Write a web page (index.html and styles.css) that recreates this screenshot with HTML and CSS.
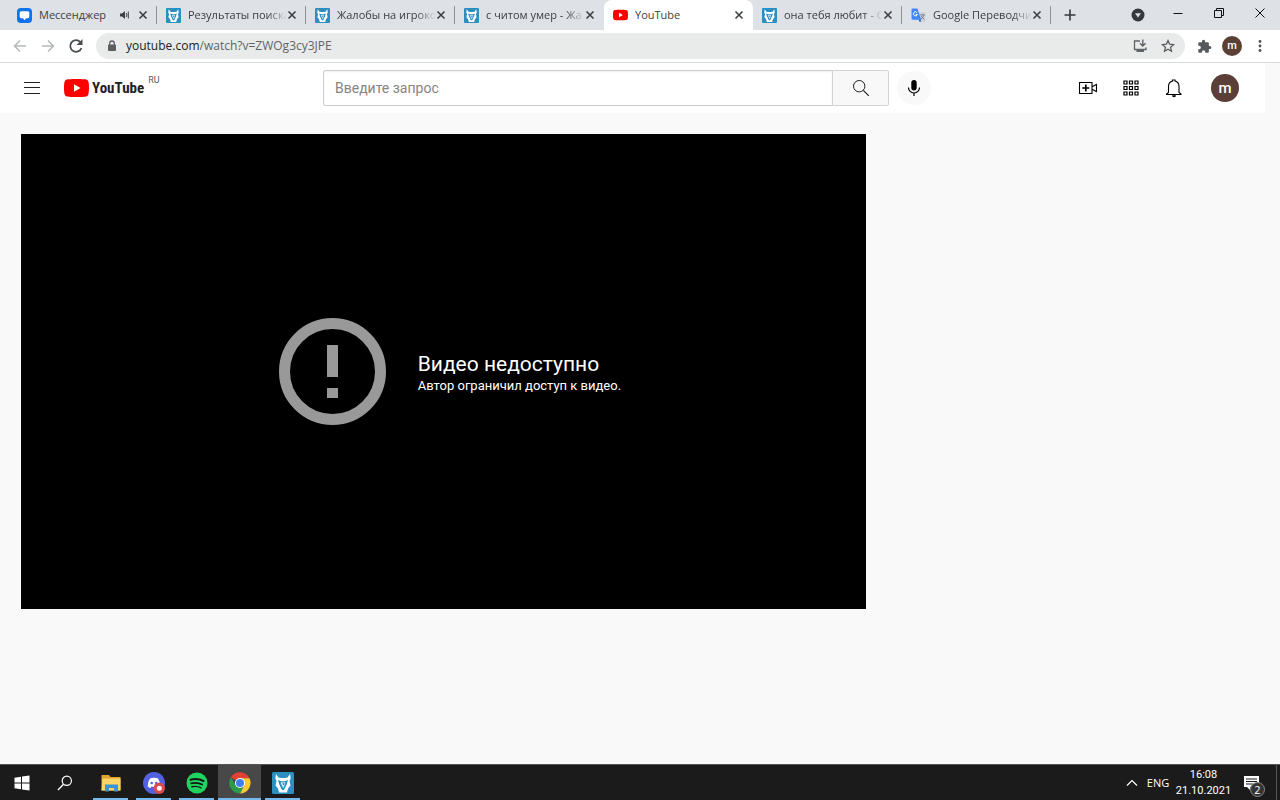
FILE: index.html
```html
<!DOCTYPE html>
<html lang="ru">
<head>
<meta charset="utf-8">
<meta name="viewport" content="width=device-width, initial-scale=1">
<title>YouTube</title>
<link rel="stylesheet" href="styles.css">
</head>
<body>
<svg class="defs" width="0" height="0" aria-hidden="true">
  <symbol id="close" viewBox="0 0 10 10"><path d="M1.500 1.500l7 7M8.500 1.500l-7 7" stroke="#3c4043" stroke-width="1.600" fill="none"/></symbol>
  <symbol id="fox" viewBox="0 0 22 22">
    <rect width="22" height="22" rx="1.500" fill="#2b8fc0"/>
    <path d="M4 2l2.500 3.500L9 6h4l2.500-.5L18 2l.7 4.500L17.500 9l1 4.500-2.500 3L15 20.500H7L6 16.500l-2.500-3 1-4.500L3.300 6.500z" fill="#fff"/>
    <path d="M6 8l3.500 1.200h3L16 8l-1.500 5L12 18h-2l-2.500-5z" fill="#2b8fc0"/>
    <path d="M8.500 10.500h5L11.300 16z" fill="#fff"/>
    <path d="M9.800 11.300h3l-1.300 2.500z" fill="#2b8fc0"/>
    <path d="M6.500 13l2 6.500M15.500 13l-2 6.500" stroke="#fff" stroke-width="1.200"/>
  </symbol>
  <symbol id="yt" viewBox="0 0 28 20"><path d="M27.400 3.100A3.500 3.500 0 0 0 24.900.6C22.700 0 14 0 14 0S5.300 0 3.100.6A3.500 3.500 0 0 0 .6 3.100C0 5.300 0 10 0 10s0 4.700.6 6.900a3.500 3.500 0 0 0 2.500 2.500C5.300 20 14 20 14 20s8.700 0 10.900-.6a3.500 3.500 0 0 0 2.500-2.500C28 14.700 28 10 28 10s0-4.700-.6-6.900z" fill="#f00"/><path d="M11.200 14.300L18.500 10l-7.300-4.300z" fill="#fff"/></symbol>
</svg>

<header class="browser">
  <div class="tabstrip">
    <nav class="tabs" aria-label="Вкладки">
      <div class="tab">
        <svg class="favicon" viewBox="0 0 14 14"><rect width="14" height="14" rx="3.500" fill="#0f73ee"/><path d="M4 3h6a1.500 1.500 0 0 1 1.500 1.500v3.500A1.500 1.500 0 0 1 10 9.500H8.500L7 11.500 5.500 9.500H4A1.500 1.500 0 0 1 2.500 8V4.500A1.500 1.500 0 0 1 4 3z" fill="#fff"/></svg>
        <a class="tab-title" href="#">Мессенджер</a>
        <svg class="sound" viewBox="0 0 10 10"><path d="M0 3.500h2L5 1v8L2 6.500H0z" fill="#3c4043"/><path d="M6.200 3q1.500 2 0 4M8.300 1.500v7" stroke="#3c4043" fill="none"/></svg>
        <button class="tab-close" aria-label="Закрыть"><svg><use href="#close"/></svg></button>
      </div>
      <div class="tab">
        <svg class="favicon"><use href="#fox"/></svg>
        <a class="tab-title" href="#">Результаты поиска</a>
        <button class="tab-close" aria-label="Закрыть"><svg><use href="#close"/></svg></button>
      </div>
      <div class="tab">
        <svg class="favicon"><use href="#fox"/></svg>
        <a class="tab-title" href="#">Жалобы на игроко</a>
        <button class="tab-close" aria-label="Закрыть"><svg><use href="#close"/></svg></button>
      </div>
      <div class="tab before-active">
        <svg class="favicon"><use href="#fox"/></svg>
        <a class="tab-title" href="#">с читом умер - Жа</a>
        <button class="tab-close" aria-label="Закрыть"><svg><use href="#close"/></svg></button>
      </div>
      <div class="tab active">
        <svg class="favicon"><use href="#yt"/></svg>
        <a class="tab-title" href="#" aria-current="page">YouTube</a>
        <button class="tab-close" aria-label="Закрыть"><svg><use href="#close"/></svg></button>
      </div>
      <div class="tab">
        <svg class="favicon"><use href="#fox"/></svg>
        <a class="tab-title" href="#">она тебя любит - С</a>
        <button class="tab-close" aria-label="Закрыть"><svg><use href="#close"/></svg></button>
      </div>
      <div class="tab">
        <svg class="favicon" viewBox="0 0 14 14"><path d="M6 4h6.500a1 1 0 0 1 1 1v7a1 1 0 0 1-1 1H9z" fill="#cfd3d8"/><path d="M8.500 6.500h4.500M10.800 5.500v1M12 6.500q-.5 2.500-3 4M9.500 7.500q1 2 3 3" stroke="#6a7f96" stroke-width=".8" fill="none"/><path d="M1.500.5H6L9.500 11H1.500a1 1 0 0 1-1-1V1.500a1 1 0 0 1 1-1z" fill="#4285f4"/><path d="M7 11h2.500L8.500 13.500z" fill="#2459b8"/><path d="M5.700 4.300A1.900 1.900 0 1 0 6 6H4.300" stroke="#fff" stroke-width=".9" fill="none"/></svg>
        <a class="tab-title" href="#">Google Переводчи</a>
        <button class="tab-close" aria-label="Закрыть"><svg><use href="#close"/></svg></button>
      </div>
      <button class="new-tab" aria-label="Новая вкладка"><svg viewBox="0 0 12 12"><path d="M6 .5v11M.5 6h11" stroke="#35383b" stroke-width="1.600"/></svg></button>
    </nav>
    <div class="window-controls">
      <button class="tab-search" aria-label="Поиск вкладок"><svg viewBox="0 0 14 14"><circle cx="7" cy="7" r="6.500" fill="#35393e"/><path d="M4 5.300h6L7 9.500z" fill="#dee1e6"/></svg></button>
      <button aria-label="Свернуть"><svg viewBox="0 0 14 14"><path d="M2.500 7.500h9" stroke="#111"/></svg></button>
      <button aria-label="Свернуть в окно"><svg viewBox="0 0 14 14"><path d="M2.500 4.500h7v7h-7zM4.500 4.500v-2h7v7h-2" stroke="#111" fill="none"/></svg></button>
      <button aria-label="Закрыть окно"><svg viewBox="0 0 14 14"><path d="M2.500 2.500l9 9M11.500 2.500l-9 9" stroke="#111"/></svg></button>
    </div>
  </div>

  <div class="toolbar">
    <button class="tool" aria-label="Назад"><svg viewBox="0 0 16 16"><path d="M14 8H2.500M8 2.500L2.500 8 8 13.500" stroke="#b5b8bb" stroke-width="1.500" fill="none"/></svg></button>
    <button class="tool" aria-label="Вперёд"><svg viewBox="0 0 16 16"><path d="M2 8h11.500M8 2.500l5.500 5.500L8 13.500" stroke="#b5b8bb" stroke-width="1.500" fill="none"/></svg></button>
    <button class="tool" aria-label="Обновить"><svg viewBox="0 0 16 16"><path d="M13.500 10A5.800 5.800 0 1 1 12.300 4" stroke="#4b4f53" stroke-width="1.800" fill="none"/><path d="M14.500 1v6H8.500z" fill="#4b4f53"/></svg></button>
    <form class="omnibox">
      <svg class="lock" viewBox="0 0 10 12"><path d="M2.700 5V3.300a2.300 2.300 0 0 1 4.600 0V5" stroke="#5b5f62" stroke-width="1.300" fill="none"/><rect x="1" y="4.500" width="8" height="6.500" rx="1" fill="#5b5f62"/></svg>
      <label class="url"><span class="host">youtube.com</span><input type="text" aria-label="Адрес" value="/watch?v=ZWOg3cy3JPE"></label>
      <button type="button" class="tool" aria-label="Установить"><svg viewBox="0 0 16 16"><path d="M8 3H2.500v8.500H14V9.500" stroke="#5f6368" stroke-width="1.300" fill="none"/><path d="M10.800 1.500v6M8 5.200L10.800 8l2.800-2.800" stroke="#5f6368" stroke-width="1.400" fill="none"/><path d="M4.500 13h7.500" stroke="#5f6368" stroke-width="2"/></svg></button>
      <button type="button" class="tool" aria-label="Добавить в закладки"><svg viewBox="0 0 16 16"><path d="M8 2.500l1.600 3.700 4 .4-3 2.700.9 4L8 11.200l-3.500 2.100.9-4-3-2.700 4-.4z" stroke="#55595d" stroke-width="1.200" fill="none"/></svg></button>
    </form>
    <button class="tool puzzle" aria-label="Расширения"><svg viewBox="0 0 24 24"><path d="M20.500 11H19V7a2 2 0 0 0-2-2h-4V3.500a2.500 2.500 0 0 0-5 0V5H4a2 2 0 0 0-2 2v3.800h1.500a2.700 2.700 0 0 1 0 5.400H2V20a2 2 0 0 0 2 2h3.800v-1.500a2.700 2.700 0 0 1 5.400 0V22H17a2 2 0 0 0 2-2v-4h1.500a2.500 2.500 0 0 0 0-5z" fill="#55595e"/></svg></button>
    <button class="tool" aria-label="Профиль"><span class="avatar small">m</span></button>
    <button class="tool" aria-label="Меню"><svg viewBox="0 0 16 16"><g fill="#4f5357"><circle cx="8" cy="3.500" r="1.400"/><circle cx="8" cy="8" r="1.400"/><circle cx="8" cy="12.500" r="1.400"/></g></svg></button>
  </div>
</header>

<div class="page">
  <header class="masthead">
    <div class="brand">
      <button class="menu" aria-label="Меню YouTube"><svg viewBox="0 0 16 14"><path d="M0 1.500h16M0 6.500h16M0 12.500h16" stroke="#222"/></svg></button>
      <a class="logo" href="#"><svg><use href="#yt"/></svg><span class="wordmark">YouTube</span><span class="region">RU</span></a>
    </div>
    <form class="search">
      <input type="text" class="search-box" placeholder="Введите запрос" aria-label="Введите запрос">
      <button type="button" class="search-button" aria-label="Поиск"><svg viewBox="0 0 18 18"><circle cx="7.200" cy="7.200" r="5.700" stroke="#222" fill="none"/><path d="M11.300 11.300l5.500 5.500" stroke="#222" stroke-width="1.200"/></svg></button>
      <button type="button" class="mic" aria-label="Голосовой поиск"><svg viewBox="0 0 18 18"><rect x="6.300" y="1" width="5.400" height="10.500" rx="2.700"/><path d="M3.500 8.500a5.500 5.500 0 0 0 11 0M9 14v3" stroke="#000" stroke-width="1.200" fill="none"/></svg></button>
    </form>
    <div class="actions">
      <button aria-label="Создать"><svg viewBox="0 0 20 20"><path d="M1.500 4.500h12.500v11H1.500zM14.500 8.500l4-2v7l-4-2" stroke="#000" stroke-width="1.100" fill="none"/><path d="M7.800 6.500v7M4.300 10h7" stroke="#000" stroke-width="1.700"/></svg></button>
      <button aria-label="Приложения"><svg viewBox="0 0 20 20"><g fill="none" stroke="#000" stroke-width="1.200"><path d="M3 3h3v3H3zM8.500 3h3v3h-3zM14 3h3v3h-3zM3 8.500h3v3H3zM8.500 8.500h3v3h-3zM14 8.500h3v3h-3zM3 14h3v3H3zM8.500 14h3v3h-3zM14 14h3v3h-3z"/></g></svg></button>
      <button aria-label="Уведомления"><svg viewBox="0 0 20 20"><path d="M4.500 14.500V8.500q0-4.500 4-5.500V2h2.500v1q4 1 4 5.500v6l2 1.500v.5H2.500v-.5z" stroke="#000" stroke-width="1.100" fill="none"/><path d="M8 17.200h4a2 2 0 0 1-4 0z"/></svg></button>
      <button class="account" aria-label="Аккаунт"><span class="avatar">m</span></button>
    </div>
  </header>

  <main class="content">
    <section class="player">
      <div class="error">
        <svg class="error-icon" viewBox="0 0 107 107"><circle cx="53.500" cy="53.500" r="48" stroke="#999" stroke-width="11" fill="none"/><path d="M48 27h11v32H48zM48 70h11v10H48z" fill="#999"/></svg>
        <div class="error-text">
          <h1>Видео недоступно</h1>
          <p>Автор ограничил доступ к видео.</p>
        </div>
      </div>
    </section>
  </main>
</div>

<footer class="taskbar">
  <button aria-label="Пуск"><svg class="glyph" viewBox="0 0 16 16"><path d="M.5 2.700L7 1.800v5.700H.5zM8 1.600l7.500-1.100v7H8zM.5 8.500H7v5.700l-6.500-.9zM8 8.500h7.500v7L8 14.400z" fill="#fff"/></svg></button>
  <button aria-label="Поиск Windows"><svg class="glyph" viewBox="0 0 16 16"><circle cx="9.800" cy="5.800" r="4.600" stroke="#fff" stroke-width="1.200" fill="none"/><path d="M6.500 9.200L1 15" stroke="#fff" stroke-width="1.400"/></svg></button>
  <div class="apps">
    <button class="app" aria-label="Проводник"><svg viewBox="0 0 22 22"><path d="M1.500 3h7.500l1.500 2h10v13.500h-19z" fill="#e0a32e"/><path d="M2.500 6.500h18v12h-19z" fill="#fbd568"/><path d="M5 12.500h13v7h-4V16H9v3.500H5z" fill="#3f94cf"/></svg></button>
    <button class="app" aria-label="Discord"><svg viewBox="0 0 22 22"><circle cx="11" cy="11" r="11" fill="#5361e0"/><path d="M7 6.500q4-1.500 8 0 2.500 3.500 2.300 8-1.500 1.300-3 1.400l-.8-1.300q-2.500.6-5 0l-.8 1.300q-1.500-.1-3-1.400Q4.500 10 7 6.500z" fill="#fff"/><circle cx="8.700" cy="11" r="1.300" fill="#5361e0"/><circle cx="13.300" cy="11" r="1.300" fill="#5361e0"/><circle cx="16.300" cy="16.300" r="5.700" fill="#e0484d"/><circle cx="16.300" cy="16.300" r="2.500" fill="#fff"/></svg></button>
    <button class="app" aria-label="Spotify"><svg viewBox="0 0 22 22"><circle cx="11" cy="11" r="10.500" fill="#1fd55f"/><g stroke="#151515" fill="none" stroke-linecap="round"><path d="M4.500 7.800q7-2 13 1.200" stroke-width="2"/><path d="M5.200 11.400q6-1.600 11 1.200" stroke-width="1.700"/><path d="M5.800 14.800q5-1.300 9.200 1" stroke-width="1.400"/></g></svg></button>
    <button class="app current" aria-label="Chrome"><svg viewBox="0 0 22 22"><path d="M11 11L2 5.200A10.500 10.500 0 0 1 20.400 6.300H11z" fill="#e34133"/><path d="M11 11h9.500L20.400 6.300A10.500 10.500 0 0 1 11 21.500l4-8z" fill="#fbc934"/><path d="M11 11l4 2.600-4 7.900A10.500 10.500 0 0 1 2 5.300l4.800 7.900z" fill="#2c9c4c"/><path d="M11 6.300h9.400q1 2 .9 4.700H11z" fill="#fbc934"/><circle cx="11" cy="11" r="5" fill="#fff"/><circle cx="11" cy="11" r="4" fill="#3c80ee"/></svg></button>
    <button class="app" aria-label="Клиент"><svg><use href="#fox"/></svg></button>
  </div>
  <div class="tray">
    <button class="chevron" aria-label="Скрытые значки"><svg viewBox="0 0 12 8"><path d="M1 6.500l5-5 5 5" stroke="#fff" stroke-width="1.200" fill="none"/></svg></button>
    <button class="lang">ENG</button>
    <button class="clock"><time datetime="2021-10-21T16:08">16:08<br>21.10.2021</time></button>
    <button class="notices" aria-label="Уведомления Windows"><svg viewBox="0 0 16 16"><path d="M0 1h15v11H6v3l-3-3H0z" fill="#fff"/><path d="M2 4h11M2 6.500h11M2 9h7" stroke="#1b1b1b"/></svg><span class="badge">2</span></button>
    <span class="peek"></span>
  </div>
</footer>
</body>
</html>
```
FILE: styles.css
```css
* { box-sizing: border-box; }

body {
  margin: 0;
  min-height: 100vh;
  display: flex;
  flex-direction: column;
  background: #f9f9f9;
  font-family: "Open Sans", "Noto Sans", sans-serif;
  color: #3c4043;
}

button {
  display: flex;
  align-items: center;
  justify-content: center;
  padding: 0;
  border: 0;
  background: none;
  color: inherit;
  font: inherit;
}

a { color: inherit; text-decoration: none; }
svg { display: block; flex: none; }
.defs { position: absolute; }

/* Browser chrome */
.tabstrip {
  display: flex;
  justify-content: space-between;
  height: 30px;
  padding-left: 8px;
  background: #dee1e6;
}
.tabs { display: flex; flex: 1; min-width: 0; }
.tab {
  display: flex;
  align-items: center;
  flex: 0 1 149px;
  min-width: 0;
  padding: 0 9px;
  background: linear-gradient(#8f9399, #8f9399) right center / 1px 18px no-repeat;
}
.tab.before-active { background: none; }
.tab.active { background: #fff; border-radius: 8px 8px 0 0; }
.favicon { width: 15px; height: 15px; margin-right: 7px; }
.tab.active .favicon { height: 12px; }
.tab-title {
  flex: 1;
  min-width: 0;
  overflow: hidden;
  white-space: nowrap;
  font-size: 11px;
  line-height: 16px;
  mask-image: linear-gradient(to right, #000 80%, transparent);
}
.tab:first-child .tab-title,
.tab.active .tab-title { mask-image: none; }
.sound { width: 10px; height: 10px; margin-right: 8px; }
.tab-close { width: 10px; height: 16px; }
.tab-close svg { width: 10px; height: 10px; }
.new-tab { width: 37px; }
.new-tab svg { width: 12px; height: 12px; }

.window-controls { display: flex; }
.window-controls button { width: 41px; height: 26px; }
.window-controls .tab-search { width: 38px; height: 30px; }
.window-controls svg { width: 14px; height: 14px; }

.toolbar {
  display: flex;
  align-items: center;
  height: 33px;
  padding: 0 6px;
  background: #fff;
  border-bottom: 1px solid #d8dadc;
}
.tool { width: 28px; height: 26px; }
.tool svg { width: 16px; height: 16px; }
.tool.puzzle { margin-left: 5px; }
.puzzle svg { width: 15px; height: 15px; }
.omnibox {
  display: flex;
  align-items: center;
  flex: 1;
  min-width: 0;
  height: 26px;
  margin-left: 6px;
  padding: 0 3px 0 11px;
  border-radius: 13px;
  background: #e8ebea;
}
.lock { width: 10px; height: 12px; margin-right: 9px; }
.url {
  display: flex;
  flex: 1;
  min-width: 0;
  font-size: 12px;
  line-height: 18px;
}
.host { color: #222; }
.url input {
  flex: 1;
  min-width: 0;
  padding: 0;
  border: 0;
  outline: 0;
  background: none;
  color: #606468;
  font: inherit;
}

.avatar {
  display: flex;
  align-items: center;
  justify-content: center;
  width: 28px;
  height: 28px;
  padding-bottom: 1px;
  border-radius: 50%;
  background: #5b4037;
  color: #fff;
  font: 500 15px/20px Roboto, sans-serif;
}
.avatar.small { width: 20px; height: 20px; font-size: 11px; }

/* YouTube page */
.page {
  flex: 1;
  display: flex;
  flex-direction: column;
  font-family: Roboto, sans-serif;
}
.masthead {
  display: grid;
  grid-template-columns: 1fr minmax(0, 608px) 1fr;
  align-items: center;
  height: 50px;
  margin-right: 15px;
  padding: 0 24px 0 13px;
  background: #fff;
}
.brand { display: flex; align-items: center; }
.menu { width: 38px; height: 36px; }
.menu svg { width: 16px; height: 14px; }
.logo { display: flex; align-items: center; margin-left: 13px; color: #212121; }
.logo svg { width: 25px; height: 18px; margin-right: 3px; }
.wordmark { font: 700 15px/20px "Liberation Sans Narrow", "Roboto Condensed", Roboto, sans-serif; }
.region {
  align-self: flex-start;
  margin: -4px 0 0 4px;
  color: #606060;
  font-size: 9px;
  line-height: 12px;
}

.search { display: flex; align-items: center; }
.search-box {
  flex: 1;
  min-width: 0;
  height: 36px;
  padding: 0 11px;
  border: 1px solid #ccc;
  border-radius: 2px 0 0 2px;
  outline: 0;
  box-shadow: inset 0 1px 2px #eee;
  background: #fff;
  font: 14px/20px Roboto, sans-serif;
}
.search-box::placeholder { color: #858585; opacity: 1; }
.search-button {
  width: 57px;
  height: 36px;
  margin-left: -1px;
  border: 1px solid #d3d3d3;
  border-radius: 0 2px 2px 0;
  background: #f8f8f8;
}
.search-button svg, .mic svg { width: 18px; height: 18px; }
.mic {
  width: 34px;
  height: 34px;
  margin-left: 8px;
  border-radius: 50%;
  background: #f9f9f9;
}

.actions { display: flex; align-items: center; justify-content: flex-end; padding-right: 2px; }
.actions button { width: 43px; height: 36px; }
.actions svg { width: 20px; height: 20px; }
.actions .account { width: 28px; margin-left: 16px; }

.content { padding: 21px; }
.player {
  display: flex;
  align-items: center;
  justify-content: center;
  width: 66vw;
  aspect-ratio: 16 / 9;
  padding-left: 13px;
  background: #000;
}
.error { display: flex; align-items: center; gap: 32px; }
.error-icon { width: 107px; height: 107px; }
.error-text { color: #fff; }
.error-text h1 { margin: 0; font-size: 21px; line-height: 28px; font-weight: 400; }
.error-text p { margin: 0; font-size: 13px; line-height: 16px; }

/* Windows taskbar */
.taskbar {
  display: flex;
  height: 36px;
  background: #1b1b1b;
  border-top: 1px solid #555;
  color: #fff;
}
.taskbar > button, .app { width: 43px; }
.glyph { width: 16px; height: 16px; }
.apps { display: flex; margin-left: 3px; }
.app {
  background: linear-gradient(#76b9ed, #76b9ed) center bottom / 35px 2px no-repeat;
}
.app.current {
  background: linear-gradient(#76b9ed, #76b9ed) center bottom / 100% 2px no-repeat #484848;
}
.app svg { width: 22px; height: 22px; }
.tray {
  display: flex;
  align-items: stretch;
  margin-left: auto;
  font-size: 11px;
  line-height: 16px;
}
.chevron { width: 26px; }
.chevron svg { width: 12px; height: 8px; }
.lang { width: 26px; }
.clock { width: 65px; text-align: center; font-family: Roboto, sans-serif; }
.notices { position: relative; width: 40px; padding-right: 9px; }
.notices svg { width: 16px; height: 16px; }
.badge {
  position: absolute;
  right: 11px;
  bottom: 3px;
  width: 15px;
  height: 15px;
  border: 1px solid #888;
  border-radius: 50%;
  background: #333;
  font-size: 11px;
  line-height: 13px;
}
.peek { width: 4px; border-left: 1px solid #555; }
```
